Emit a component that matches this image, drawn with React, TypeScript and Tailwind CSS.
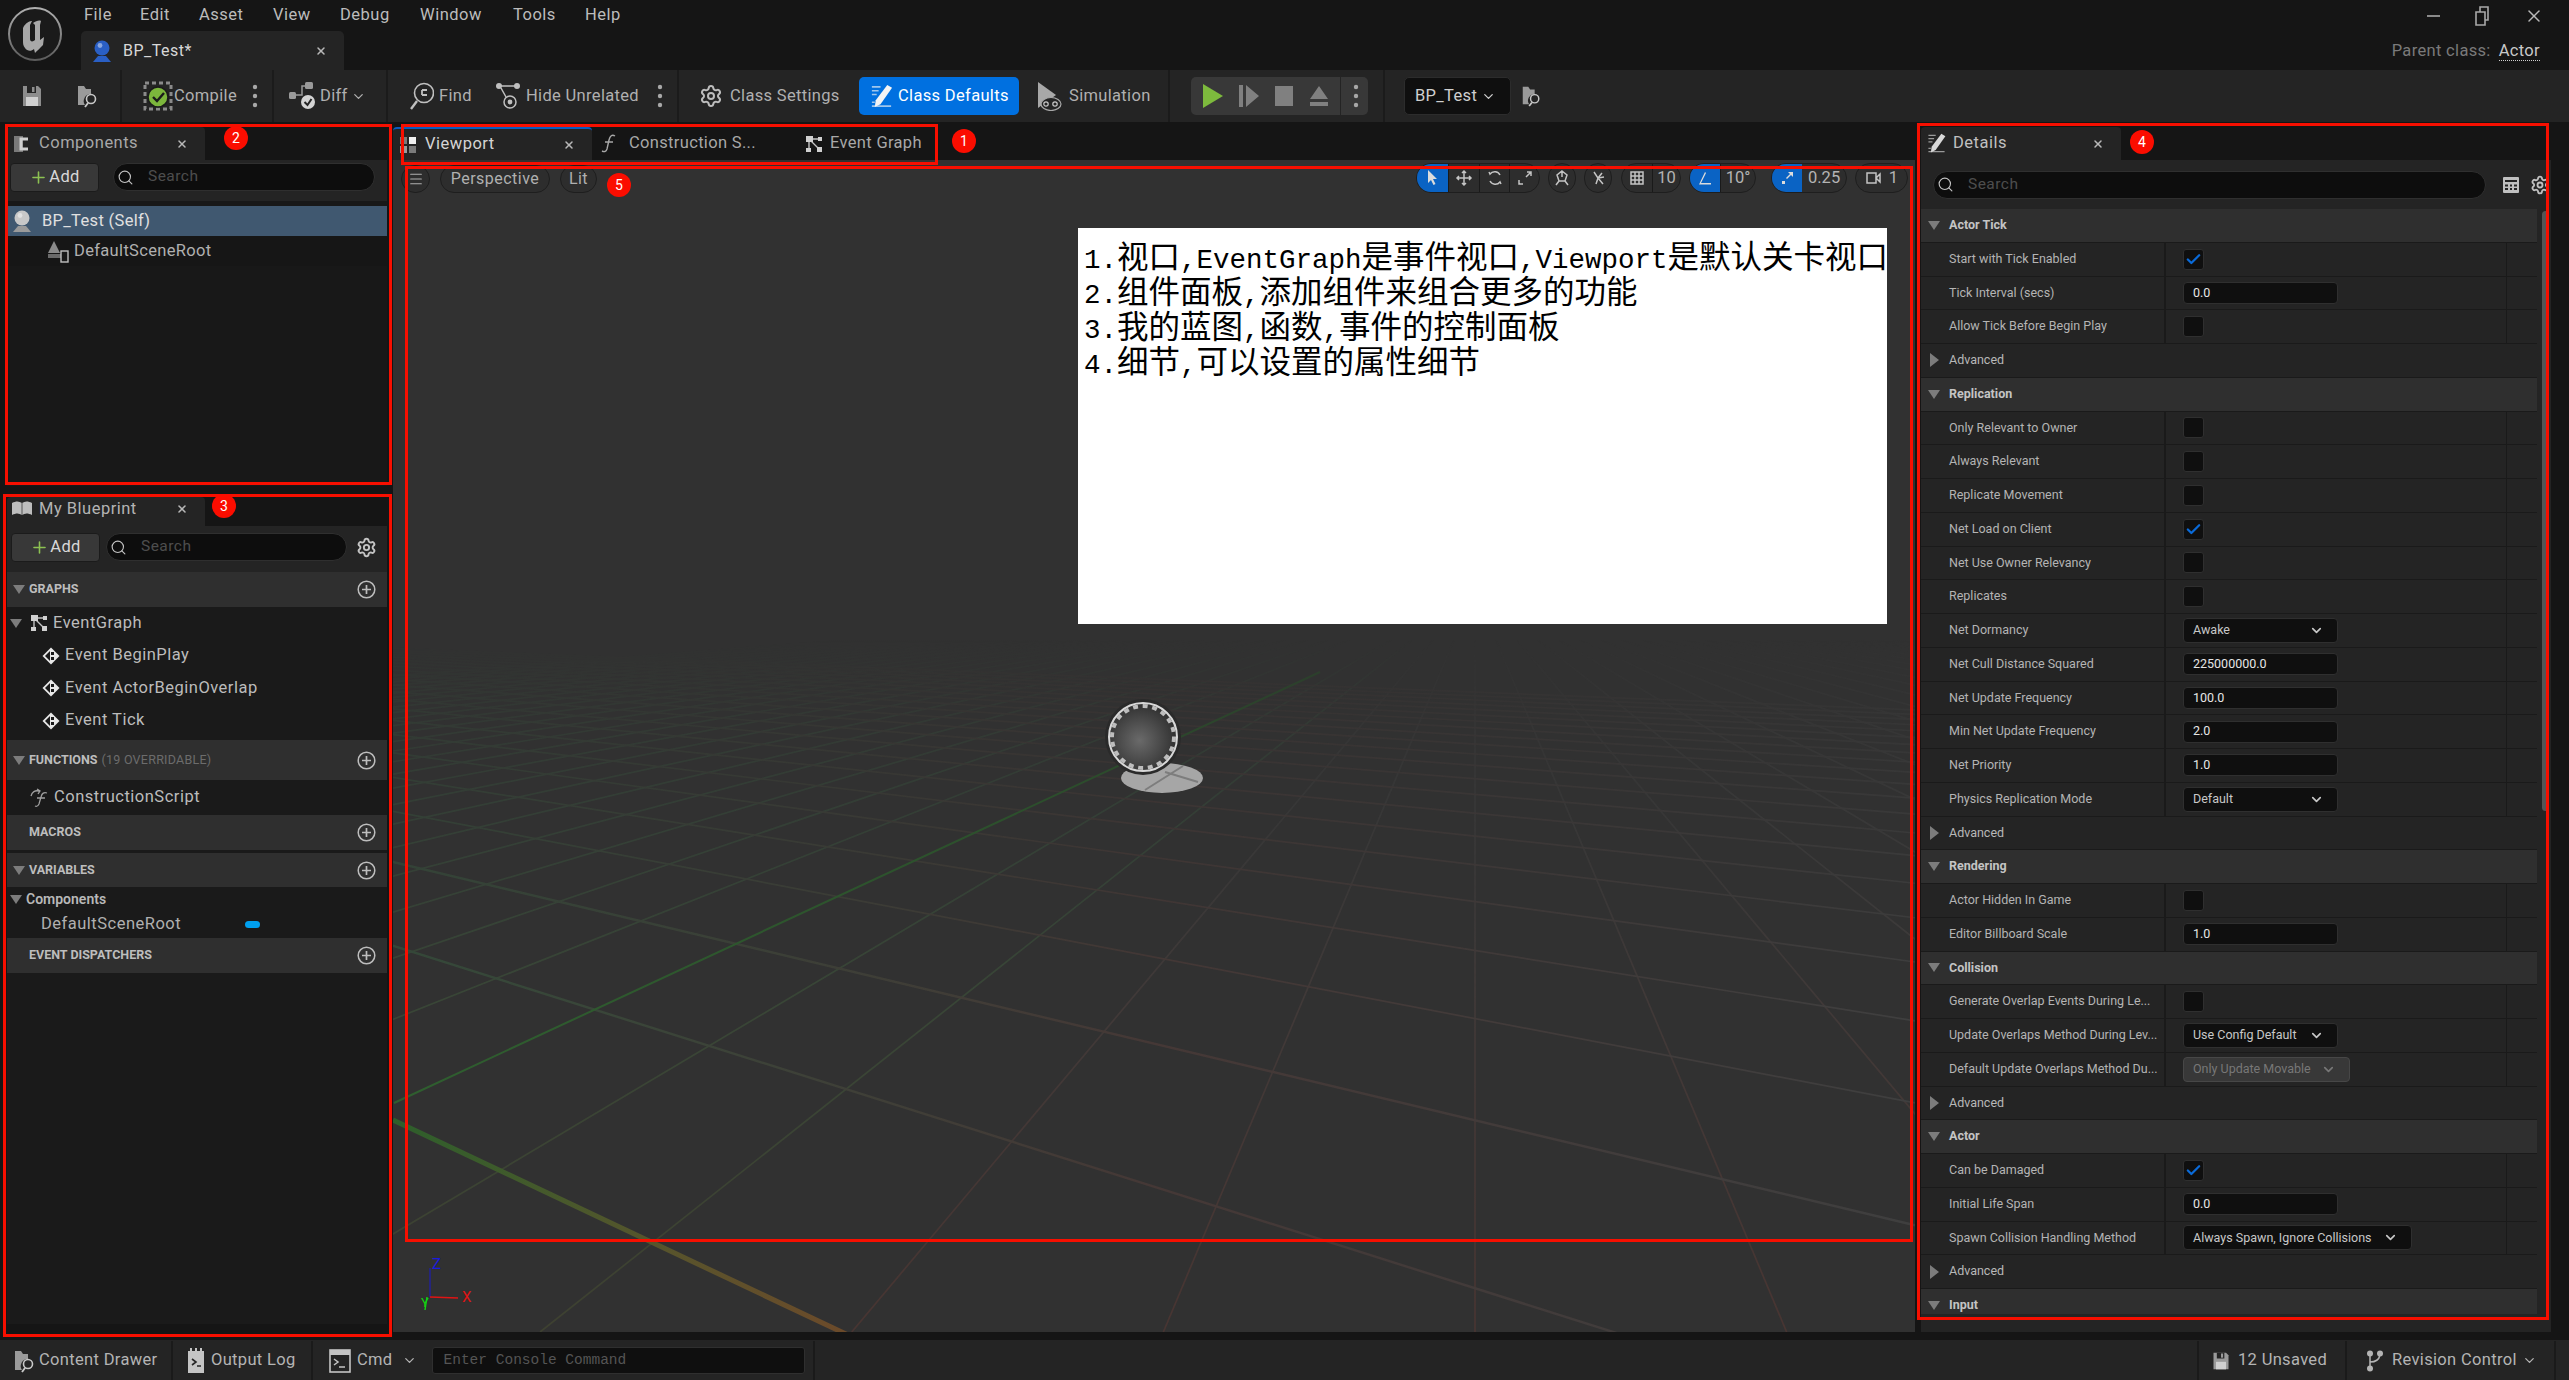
import React from "react";
import { ChevronDown, Plus, Search, Settings, X, Menu, Check } from "lucide-react";

const Sep = ({ ml = "" }: { ml?: string }) => <div className={`h-[52px] w-[2px] shrink-0 bg-[#1b1b1b] ${ml}`} />;

const Floppy = ({ size = 24, c = "#8d8d8d" }: { size?: number; c?: string }) => (
  <svg width={size} height={size} viewBox="0 0 24 24">
    <path d="M3 2h15l3 3v17H3z" fill={c} />
    <rect x="7" y="2" width="9" height="7" fill="#242424" />
    <rect x="12" y="3" width="2.5" height="5" fill={c} />
    <rect x="6" y="13" width="12" height="9" fill="#d0d0d0" />
  </svg>
);
const FolderFind = ({ size = 24 }: { size?: number }) => (
  <svg width={size} height={size} viewBox="0 0 24 24">
    <path d="M3 2h6l2 3h5v5a7 7 0 0 0-6 11H3z" fill="#9a9a9a" />
    <circle cx="16" cy="15" r="4.5" fill="none" stroke="#c8c8c8" strokeWidth="1.6" />
    <path d="M13 19l-3 4" stroke="#c8c8c8" strokeWidth="1.8" />
  </svg>
);
const Dots = () => (
  <svg width="6" height="26" viewBox="0 0 6 26">
    <circle cx="3" cy="4" r="2.2" fill="#a8a8a8" />
    <circle cx="3" cy="13" r="2.2" fill="#a8a8a8" />
    <circle cx="3" cy="22" r="2.2" fill="#a8a8a8" />
  </svg>
);
const GraphIcon = ({ size = 18 }: { size?: number }) => (
  <svg width={size} height={size} viewBox="0 0 18 18">
    <path d="M4 4l10 0M5 5l9 9M4 5v10" stroke="#c4c4c4" strokeWidth="1.4" fill="none" />
    <rect x="1" y="1" width="7" height="6" fill="#d0d0d0" />
    <rect x="13" y="2" width="4" height="4" fill="#d0d0d0" />
    <rect x="12" y="12" width="5" height="5" fill="#d0d0d0" />
    <rect x="1" y="13" width="5" height="4" fill="#d0d0d0" />
  </svg>
);
const PencilDoc = ({ size = 26, c = "#d8d8d8" }: { size?: number; c?: string }) => (
  <svg width={size} height={size} viewBox="0 0 26 26">
    <path d="M3 3h9M3 7h7M3 11h5M3 23h20M3 19h3" stroke={c} strokeOpacity="0.65" strokeWidth="1.6" />
    <path d="M19 1l5 3-12 17-6 3 1-7z" fill={c} />
  </svg>
);
const EventDiamond = () => (
  <svg width="18" height="18" viewBox="0 0 18 18">
    <path d="M9 .5L17.5 9 9 17.5.5 9z" fill="#e8e8e8" />
    <path d="M8 4l-5 5 5 5z" fill="#1a1a1a" />
    <path d="M9 5h3v3H9z" fill="#1a1a1a" />
    <path d="M9 10h3v3H9z" fill="#1a1a1a" />
  </svg>
);
const Tri = ({ open = true, c = "#7c7c7c" }: { open?: boolean; c?: string }) =>
  open ? (
    <svg width="12" height="9" viewBox="0 0 12 9" className="shrink-0"><path d="M0 0h12L6 9z" fill={c} /></svg>
  ) : (
    <svg width="9" height="14" viewBox="0 0 9 14" className="shrink-0"><path d="M0 0l9 7-9 7z" fill={c} /></svg>
  );
const CirclePlus = () => (
  <svg width="19" height="19" viewBox="0 0 19 19">
    <circle cx="9.5" cy="9.5" r="8.3" fill="none" stroke="#bdbdbd" strokeWidth="1.5" />
    <path d="M5 9.5h9M9.5 5v9" stroke="#bdbdbd" strokeWidth="1.7" />
  </svg>
);
const Bust = ({ c = "#2a5fc4", base = "#2a5fc4" }: { c?: string; base?: string }) => (
  <svg width="20" height="24" viewBox="0 0 20 24">
    <circle cx="10" cy="9" r="7.5" fill={c} />
    <circle cx="8" cy="6.5" r="2.4" fill="#ffffff" fillOpacity="0.45" />
    <path d="M6 17h8l5 6H1z" fill={base} />
  </svg>
);

const Tab = ({ w, h = "h-[33px]", icon, label, labelCls = "text-[#b4b4b4]", top = false, close = true }: { w: string; h?: string; icon: React.ReactNode; label: string; labelCls?: string; top?: boolean; close?: boolean }) => (
  <div className={`flex items-center rounded-t-[4px] bg-[#242424] ${h} ${w} ${top ? "border-t-2 border-[#0a5cc0]" : ""}`}>
    <div className="flex w-[30px] shrink-0 justify-center">{icon}</div>
    <span className={`ml-[2px] text-[16.5px] tracking-[0.03em] ${labelCls}`}>{label}</span>
    <div className="flex-1" />
    {close && <X size={12} strokeWidth={3} className="mr-[17px] text-[#b8b8b8]" />}
  </div>
);

const SearchBox = ({ w, h = "h-[28px]" }: { w: string; h?: string }) => (
  <div className={`flex items-center rounded-full border border-[#2f2f2f] bg-[#0d0d0d] ${w} ${h}`}>
    <Search size={17} strokeWidth={1.6} className="ml-[3px] text-[#c4c4c4]" />
    <span className="ml-[14px] text-[15.5px] tracking-[0.03em] text-[#4d4d4d]">Search</span>
  </div>
);

const AddBtn = () => (
  <div className="flex h-[29px] w-[89px] items-center justify-center rounded-[4px] border border-[#1b1b1b] bg-[#383838]">
    <Plus size={19} strokeWidth={2} className="text-[#8cc152]" />
    <span className="ml-[1px] text-[16.5px] tracking-[0.02em] text-[#d8d8d8]">Add</span>
  </div>
);

const SecHead = ({ label, extra, h, open = true, mb = "mb-0" }: { label: string; extra?: string; h: string; open?: boolean; mb?: string }) => (
  <div className={`flex items-center bg-[#2f2f2f] pr-[11px] ${h} ${mb}`}>
    <div className="flex w-[18px] shrink-0 justify-end">{open && <Tri />}</div>
    <span className="ml-[4px] text-[12.5px] font-bold text-[#bdbdbd]">{label}</span>
    {extra && <span className="ml-[4px] text-[12.5px] tracking-[0.02em] text-[#6c6c6c]">{extra}</span>}
    <div className="flex-1" />
    <CirclePlus />
  </div>
);

const BpRow = ({ h, pl, icon, label }: { h: string; pl: string; icon?: React.ReactNode; label: string }) => (
  <div className={`flex items-center ${h} ${pl}`}>
    {icon}
    <span className="ml-[5px] text-[16.5px] tracking-[0.03em] text-[#bcbcbc]">{label}</span>
  </div>
);

type Row =
  | { t: "h"; l: string }
  | { t: "a" }
  | { t: "c"; l: string; on?: boolean }
  | { t: "i"; l: string; v: string }
  | { t: "d"; l: string; v: string; w?: string; dis?: boolean };

const rows: Row[] = [
  { t: "h", l: "Actor Tick" },
  { t: "c", l: "Start with Tick Enabled", on: true },
  { t: "i", l: "Tick Interval (secs)", v: "0.0" },
  { t: "c", l: "Allow Tick Before Begin Play" },
  { t: "a" },
  { t: "h", l: "Replication" },
  { t: "c", l: "Only Relevant to Owner" },
  { t: "c", l: "Always Relevant" },
  { t: "c", l: "Replicate Movement" },
  { t: "c", l: "Net Load on Client", on: true },
  { t: "c", l: "Net Use Owner Relevancy" },
  { t: "c", l: "Replicates" },
  { t: "d", l: "Net Dormancy", v: "Awake" },
  { t: "i", l: "Net Cull Distance Squared", v: "225000000.0" },
  { t: "i", l: "Net Update Frequency", v: "100.0" },
  { t: "i", l: "Min Net Update Frequency", v: "2.0" },
  { t: "i", l: "Net Priority", v: "1.0" },
  { t: "d", l: "Physics Replication Mode", v: "Default" },
  { t: "a" },
  { t: "h", l: "Rendering" },
  { t: "c", l: "Actor Hidden In Game" },
  { t: "i", l: "Editor Billboard Scale", v: "1.0" },
  { t: "h", l: "Collision" },
  { t: "c", l: "Generate Overlap Events During Le..." },
  { t: "d", l: "Update Overlaps Method During Lev...", v: "Use Config Default" },
  { t: "d", l: "Default Update Overlaps Method Du...", v: "Only Update Movable", w: "w-[167px]", dis: true },
  { t: "a" },
  { t: "h", l: "Actor" },
  { t: "c", l: "Can be Damaged", on: true },
  { t: "i", l: "Initial Life Span", v: "0.0" },
  { t: "d", l: "Spawn Collision Handling Method", v: "Always Spawn, Ignore Collisions", w: "w-[229px]" },
  { t: "a" },
  { t: "h", l: "Input" },
];

const DetailRow = ({ r }: { r: Row }) => {
  if (r.t === "h")
    return (
      <div className="flex h-[33.75px] shrink-0 items-center border-b border-[#1a1a1a] bg-[#2f2f2f] pl-[7px]">
        <Tri />
        <span className="ml-[9px] text-[12.5px] font-bold text-[#c4c4c4]">{r.l}</span>
      </div>
    );
  if (r.t === "a")
    return (
      <div className="flex h-[33.75px] shrink-0 items-center border-b border-[#1a1a1a] bg-[#242424] pl-[9px]">
        <Tri open={false} />
        <span className="ml-[10px] text-[12.5px] text-[#b8b8b8]">Advanced</span>
      </div>
    );
  return (
    <div className="flex h-[33.75px] shrink-0 border-b border-[#1a1a1a] bg-[#242424]">
      <div className="flex w-[245px] shrink-0 items-center overflow-hidden whitespace-nowrap border-r-2 border-[#1a1a1a] pl-[28px] text-[12.5px] text-[#b4b4b4]">{r.l}</div>
      <div className="flex w-[341px] shrink-0 items-center border-r border-[#1a1a1a] pl-[17px]">
        {r.t === "c" && (
          <div className="flex h-[21px] w-[21px] items-center justify-center rounded-[3px] border border-[#2f2f2f] bg-[#0f0f0f]">
            {r.on && <Check size={17} strokeWidth={3.2} className="text-[#0a6ad8]" />}
          </div>
        )}
        {r.t === "i" && (
          <div className="flex h-[22px] w-[155px] items-center rounded-[4px] border border-[#2f2f2f] bg-[#0f0f0f] pl-[9px] text-[12.5px] text-[#e6e6e6]">{r.v}</div>
        )}
        {r.t === "d" && (
          <div className={`flex h-[25px] items-center justify-between rounded-[4px] border pl-[9px] pr-[13px] text-[12.5px] ${r.w ?? "w-[155px]"} ${r.dis ? "border-[#474747] bg-[#383838] text-[#777777]" : "border-[#2f2f2f] bg-[#0f0f0f] text-[#c8c8c8]"}`}>
            {r.v}
            <ChevronDown size={15} strokeWidth={2.6} />
          </div>
        )}
      </div>
      <div className="flex-1" />
    </div>
  );
};

const Pill = ({ w, children }: { w: string; children: React.ReactNode }) => (
  <div className={`flex h-[30px] items-center overflow-hidden rounded-full border border-[#1e1e1e] bg-[#2d2d2d] ${w}`}>{children}</div>
);
const Seg = ({ w, on, children, border = true }: { w: string; on?: boolean; children: React.ReactNode; border?: boolean }) => (
  <div className={`flex h-full items-center justify-center ${w} ${on ? "bg-[#0a63c4]" : ""} ${border ? "border-l border-[#1a1a1a]" : ""}`}>{children}</div>
);
const S = ({ d, fill = false }: { d: string; fill?: boolean }) => (
  <svg width="18" height="18" viewBox="0 0 18 18">
    <path d={d} fill={fill ? "#dcdcdc" : "none"} stroke={fill ? "none" : "#c4c4c4"} strokeWidth="1.5" />
  </svg>
);

const Grid = () => {
  const a: React.ReactNode[] = [];
  for (let k = -30; k <= 30; k++) {
    if (k === -5) continue;
    const x = 1475 + k * 0.42 * 742;
    a.push(<line key={`a${k}`} x1={1475} y1={590} x2={x} y2={1332} stroke={k < -2 ? "url(#ga)" : k < 3 ? "url(#gc)" : "url(#gd)"} strokeWidth={1.7} />);
  }
  const b: React.ReactNode[] = [];
  for (let k = 1; k <= 22; k++) {
    const s = 1 / (2.13 + 1.03 * k);
    b.push(<line key={`b${k}`} x1={-684} y1={605} x2={1915} y2={605 + s * 2599} stroke="url(#gb)" strokeWidth={k < 3 ? 2.4 : 1.7} />);
  }
  return (
    <svg className="absolute inset-0" width="1522" height="1172" viewBox="393 160 1522 1172">
      <defs>
        <linearGradient id="fade" gradientUnits="userSpaceOnUse" x1="0" y1="640" x2="0" y2="1000">
          <stop offset="0" stopColor="#000" />
          <stop offset="0.25" stopColor="#666" />
          <stop offset="1" stopColor="#fff" />
        </linearGradient>
        <mask id="m" maskUnits="userSpaceOnUse" x="393" y="160" width="1522" height="1172">
          <rect x="393" y="160" width="1522" height="1172" fill="url(#fade)" />
        </mask>
        <linearGradient id="ga" gradientUnits="userSpaceOnUse" x1="0" y1="800" x2="0" y2="1332">
          <stop offset="0" stopColor="#36493a" />
          <stop offset="1" stopColor="#3e4131" />
        </linearGradient>
        <linearGradient id="gc" gradientUnits="userSpaceOnUse" x1="0" y1="800" x2="0" y2="1332">
          <stop offset="0" stopColor="#3c3c3c" />
          <stop offset="1" stopColor="#483532" />
        </linearGradient>
        <linearGradient id="gd" gradientUnits="userSpaceOnUse" x1="0" y1="800" x2="0" y2="1332">
          <stop offset="0" stopColor="#3e3e3e" />
          <stop offset="1" stopColor="#433735" />
        </linearGradient>
        <linearGradient id="gb" gradientUnits="userSpaceOnUse" x1="393" y1="0" x2="1915" y2="0">
          <stop offset="0" stopColor="#354b3a" />
          <stop offset="0.5" stopColor="#453836" />
          <stop offset="1" stopColor="#3f3f3f" />
        </linearGradient>
        <linearGradient id="thick" gradientUnits="userSpaceOnUse" x1="393" y1="1120" x2="848" y2="1335">
          <stop offset="0" stopColor="#2d5f2b" />
          <stop offset="0.55" stopColor="#55552c" />
          <stop offset="1" stopColor="#6c4a2a" />
        </linearGradient>
        <linearGradient id="gthin" gradientUnits="userSpaceOnUse" x1="394" y1="1103" x2="1320" y2="670">
          <stop offset="0" stopColor="#2f5f2f" />
          <stop offset="0.7" stopColor="#2c4f2c" />
          <stop offset="1" stopColor="#2c3f2c" />
        </linearGradient>
        <radialGradient id="ball" cx="0.45" cy="0.55" r="0.6">
          <stop offset="0" stopColor="#6a6a6a" />
          <stop offset="1" stopColor="#2b2b2b" />
        </radialGradient>
      </defs>
      <g mask="url(#m)">
        {a}
        {b}
      </g>
      <line x1={394} y1={1103} x2={1320} y2={672} stroke="url(#gthin)" strokeWidth={2} />
      <line x1={393} y1={1120} x2={848} y2={1335} stroke="url(#thick)" strokeWidth={5} />
      <ellipse cx={1162} cy={778} rx={41} ry={15} fill="#a6a6a6" />
      <path d="M1145 790 L1183 766 M1165 772 L1198 782" stroke="#7d7d7d" strokeWidth="2" fill="none" />
      <circle cx={1143} cy={737} r={38} fill="#2a2a2a" />
      <circle cx={1143} cy={737} r={34} fill="url(#ball)" stroke="#d8d8d8" strokeWidth="2" />
      <circle cx={1143} cy={737} r={31} fill="none" stroke="#bdbdbd" strokeWidth="4" strokeDasharray="5 4.7" />
      <line x1={430} y1={1297} x2={430} y2={1268} stroke="#1a1ac8" strokeWidth="1" />
      <line x1={430} y1={1297} x2={458} y2={1298} stroke="#e01414" strokeWidth="1.4" />
      <line x1={427} y1={1297} x2={425} y2={1310} stroke="#12d412" strokeWidth="1.4" />
    </svg>
  );
};

const Rect = ({ cls }: { cls: string }) => <div className={`pointer-events-none absolute border-[3px] border-[#f70f00] ${cls}`} />;
const Badge = ({ n, cls }: { n: string; cls: string }) => (
  <div className={`absolute flex h-[24px] w-[24px] items-center justify-center rounded-full bg-[#fb0d00] text-[14px] text-white ${cls}`}>{n}</div>
);

const Logo = () => (
  <svg width="56" height="56" viewBox="0 0 56 56" className="shrink-0">
    <defs>
      <linearGradient id="lg" x1="0" y1="0" x2="0" y2="1">
        <stop offset="0" stopColor="#b0b0b0" />
        <stop offset="1" stopColor="#5c5c5c" />
      </linearGradient>
    </defs>
    <circle cx="28" cy="28" r="26" fill="#1a1a1a" stroke="url(#lg)" strokeWidth="2" />
    <path d="M17 20c3-4 6-5 8-5l-2 4v14c0 3 3 3 5 1V19l-2-2c3-2 6-3 8-2l-1 4v15l4-3-1 8c-3 3-6 6-8 8l-1-4c-3 3-7 2-9-1-2-2-2-5-2-7V22z" fill="#a8a8a8" />
  </svg>
);

const StatusItem = ({ w, children }: { w: string; children: React.ReactNode }) => (
  <div className={`flex h-full shrink-0 items-center border-r-2 border-[#1a1a1a] ${w}`}>{children}</div>
);

const L = ({ children }: { children: React.ReactNode }) => (
  <span className="font-['Liberation_Mono',monospace] text-[27.5px] leading-[0]">{children}</span>
);

export default function App() {
  return (
    <div className="relative flex h-[1380px] w-[2569px] flex-col overflow-hidden bg-[#151515] font-['Roboto',sans-serif]">
      {/* title bar */}
      <div className="relative flex h-[70px] shrink-0 bg-[#151515]">
        <div className="ml-[7px] mt-[6px]"><Logo /></div>
        <div className="ml-[18px] flex flex-col">
          <div className="flex h-[31px] items-start pl-[3px] pt-[3px] text-[16.5px] tracking-[0.03em] text-[#bcbcbc]">
            <span className="w-[56px]">File</span>
            <span className="w-[59px]">Edit</span>
            <span className="w-[74px]">Asset</span>
            <span className="w-[67px]">View</span>
            <span className="w-[80px]">Debug</span>
            <span className="w-[93px]">Window</span>
            <span className="w-[72px]">Tools</span>
            <span>Help</span>
          </div>
          <div className="flex h-[39px] w-[263px] items-center rounded-t-[5px] bg-[#242424] pl-[11px]">
            <Bust />
            <span className="ml-[11px] text-[16px] tracking-[0.03em] text-[#d8d8d8]">BP_Test*</span>
            <div className="flex-1" />
            <X size={12} strokeWidth={3} className="mr-[17px] text-[#b8b8b8]" />
          </div>
        </div>
        <div className="flex-1" />
        <div className="flex flex-col items-end pr-[29px]">
          <div className="flex h-[31px] items-center gap-[35px] text-[#b8b8b8]">
            <div className="h-[2px] w-[13px] bg-[#8a8a8a]" />
            <svg width="14" height="20" viewBox="0 0 14 20"><path d="M1 6h9v13H1zM5 6V1h8v13h-3" fill="none" stroke="#a8a8a8" strokeWidth="1.6" /></svg>
            <X size={20} strokeWidth={1.8} className="-mr-[4px]" />
          </div>
          <div className="mt-[8px] flex items-center text-[16.5px] tracking-[0.02em]">
            <span className="text-[#7a7a7a]">Parent class:</span>
            <span className="ml-[8px] border-b border-dotted border-[#d0d0d0] leading-[18px] text-[#c8c8c8]">Actor</span>
          </div>
        </div>
      </div>

      {/* toolbar */}
      <div className="flex h-[52px] shrink-0 items-center bg-[#242424] text-[16.5px] tracking-[0.02em] text-[#b0b0b0]">
        <div className="flex w-[120px] shrink-0 items-center pl-[20px]">
          <Floppy />
          <div className="ml-[31px]"><FolderFind /></div>
        </div>
        <Sep />
        <div className="flex w-[150px] shrink-0 items-center pl-[21px]">
          <svg width="30" height="30" viewBox="0 0 30 30">
            <rect x="2" y="2" width="26" height="26" fill="none" stroke="#8a8a8a" strokeWidth="3" strokeDasharray="4 3" />
            <circle cx="15" cy="16" r="10" fill="#7cb63c" stroke="#1b1b1b" strokeWidth="1.5" />
            <path d="M10 16l4 4 7-8" fill="none" stroke="#1b1b1b" strokeWidth="2.4" />
          </svg>
          <span className="ml-[1px] w-[78px]">Compile</span>
          <Dots />
        </div>
        <Sep />
        <div className="flex w-[112px] shrink-0 items-center pl-[15px]">
          <svg width="30" height="28" viewBox="0 0 30 28">
            <rect x="0" y="10" width="7" height="7" rx="1.5" fill="#9a9a9a" />
            <rect x="16" y="0" width="8" height="7" rx="1.5" fill="#9a9a9a" />
            <path d="M7 13h6V4h3" fill="none" stroke="#9a9a9a" strokeWidth="1.5" />
            <circle cx="19" cy="20" r="7" fill="#d4d4d4" />
            <path d="M15.5 20l3 3 4-6" fill="none" stroke="#242424" strokeWidth="2" />
          </svg>
          <span className="ml-[1px]">Diff</span>
          <ChevronDown size={15} strokeWidth={2} className="ml-[3px]" />
        </div>
        <Sep />
        <div className="flex w-[289px] shrink-0 items-center pl-[22px]">
          <svg width="24" height="28" viewBox="0 0 24 28">
            <circle cx="14" cy="11" r="9.5" fill="none" stroke="#c0c0c0" strokeWidth="1.6" />
            <path d="M7 19L1 27" stroke="#c0c0c0" strokeWidth="2.4" />
            <path d="M12 8h5M12 13h5M12 8v5" stroke="#c0c0c0" strokeWidth="1.8" fill="none" />
          </svg>
          <span className="ml-[5px] w-[42px]">Find</span>
          <svg width="26" height="28" viewBox="0 0 26 28" className="ml-[15px]">
            <circle cx="3" cy="4" r="3" fill="#c0c0c0" />
            <circle cx="21" cy="4" r="3" fill="#c0c0c0" />
            <path d="M3 4h18M5 6l5 9" stroke="#c0c0c0" strokeWidth="1.5" />
            <circle cx="14" cy="20" r="6" fill="none" stroke="#c0c0c0" strokeWidth="1.5" />
            <circle cx="14" cy="20" r="2.4" fill="#c0c0c0" />
          </svg>
          <span className="ml-[4px] w-[122px] whitespace-nowrap">Hide Unrelated</span>
          <div className="ml-[9px] flex"><Dots /></div>
        </div>
        <Sep />
        <div className="flex w-[180px] shrink-0 items-center pl-[20px]">
          <Settings size={24} strokeWidth={2} className="text-[#bdbdbd]" />
          <span className="ml-[7px] whitespace-nowrap">Class Settings</span>
        </div>
        <div className="flex h-[38px] w-[160px] shrink-0 items-center rounded-[5px] bg-[#0070e0] pl-[10px] text-white">
          <PencilDoc size={25} c="#f4f4f4" />
          <span className="ml-[4px] whitespace-nowrap">Class Defaults</span>
        </div>
        <div className="flex w-[149px] shrink-0 items-center pl-[17px]">
          <svg width="26" height="30" viewBox="0 0 26 30">
            <path d="M2 1l18 13-18 13z" fill="#a8a8a8" />
            <ellipse cx="15" cy="23" rx="10" ry="6.5" fill="#242424" stroke="#a8a8a8" strokeWidth="1.2" />
            <circle cx="10" cy="23" r="2.2" fill="none" stroke="#c8c8c8" strokeWidth="1.2" />
            <circle cx="19" cy="23" r="2.2" fill="none" stroke="#c8c8c8" strokeWidth="1.2" />
          </svg>
          <span className="ml-[7px]">Simulation</span>
        </div>
        <Sep />
        <div className="ml-[21px] flex h-[38px] w-[177px] shrink-0 items-center rounded-[5px] bg-[#383838] pl-[12px]">
          <svg width="20" height="24" viewBox="0 0 20 24"><path d="M0 0l20 12L0 24z" fill="#7dba3d" /></svg>
          <svg width="20" height="24" viewBox="0 0 20 24" className="ml-[16px]"><path d="M0 1h4v22H0zM7 1l13 11L7 23z" fill="#808080" /></svg>
          <div className="ml-[16px] h-[20px] w-[18px] bg-[#808080]" />
          <svg width="20" height="24" viewBox="0 0 20 24" className="ml-[16px]"><path d="M10 2l9 13H1zM1 18h18v4H1z" fill="#808080" /></svg>
          <div className="ml-[11px] h-[38px] w-[1px] bg-[#242424]" />
          <div className="ml-[12px] flex"><Dots /></div>
        </div>
        <Sep ml="ml-[15px]" />
        <div className="ml-[19px] flex h-[38px] w-[107px] shrink-0 items-center rounded-[5px] border border-[#2c2c2c] bg-[#0f0f0f] pl-[10px] text-[#d0d0d0]">
          BP_Test
          <ChevronDown size={15} strokeWidth={2} className="ml-[4px]" />
        </div>
        <div className="ml-[9px]"><FolderFind size={22} /></div>
      </div>

      {/* main */}
      <div className="flex min-h-0 flex-1">
        {/* left column */}
        <div className="flex w-[393px] shrink-0 flex-col pl-[7px] pr-[6px] pt-[5px]">
          <div className="flex h-[359px] shrink-0 flex-col">
            <Tab
              w="w-[198px]"
              icon={
                <svg width="20" height="20" viewBox="0 0 20 20">
                  <path d="M2 2h9v16H2z" fill="#7a7a7a" />
                  <path d="M16 5h-7v10h7" fill="none" stroke="#d0d0d0" strokeWidth="3" />
                </svg>
              }
              label="Components"
              labelCls="text-[#a8a8a8]"
            />
            <div className="flex h-[41px] shrink-0 items-start bg-[#242424] pl-[3px] pt-[3px]">
              <AddBtn />
              <div className="ml-[14px]"><SearchBox w="w-[262px]" /></div>
            </div>
            <div className="flex-1 bg-[#181818] pt-[5px]">
              <div className="flex h-[30px] items-center bg-[#405870] pl-[5px]">
                <Bust c="#c8c8c8" base="#9a9a9a" />
                <span className="ml-[10px] text-[16.5px] tracking-[0.02em] text-[#e0e0e0]">BP_Test (Self)</span>
              </div>
              <div className="flex h-[30px] items-center bg-[#161616] pl-[40px]">
                <svg width="22" height="24" viewBox="0 0 22 24">
                  <path d="M7 2l6 12H1z" fill="#8a8a8a" />
                  <path d="M1 15h14v4H1z" fill="#6a6a6a" />
                  <rect x="14" y="12" width="7" height="11" fill="#1a1a1a" stroke="#c0c0c0" strokeWidth="1.4" />
                </svg>
                <span className="ml-[5px] text-[16.5px] tracking-[0.02em] text-[#b0b0b0]">DefaultSceneRoot</span>
              </div>
            </div>
          </div>
          <div className="mt-[11px] flex min-h-0 flex-1 flex-col pb-[8px]">
            <Tab
              w="w-[198px]"
              h="h-[29px] pb-[5px]"
              icon={
                <svg width="22" height="18" viewBox="0 0 22 18">
                  <path d="M1 3c4-2 7-2 10 0 3-2 6-2 10 0v12c-4-2-7-2-10 0-3-2-6-2-10 0z" fill="#bdbdbd" />
                  <path d="M11 3v12" stroke="#555555" />
                </svg>
              }
              label="My Blueprint"
              labelCls="text-[#b4b4b4]"
            />
            <div className="flex h-[46px] shrink-0 items-center bg-[#242424] pb-[4px] pl-[4px]">
              <AddBtn />
              <div className="ml-[6px]"><SearchBox w="w-[241px]" /></div>
              <Settings size={21} strokeWidth={2.2} className="ml-[9px] text-[#c4c4c4]" />
            </div>
            <div className="flex-1 bg-[#1a1a1a]">
              <SecHead h="h-[35px]" label="GRAPHS" />
              <div className="flex h-[32px] items-center pl-[3px]">
                <Tri />
                <div className="ml-[8px]"><GraphIcon /></div>
                <span className="ml-[5px] text-[16.5px] tracking-[0.03em] text-[#bcbcbc]">EventGraph</span>
              </div>
              <BpRow h="h-[33px]" pl="pl-[35px]" icon={<EventDiamond />} label="Event BeginPlay" />
              <BpRow h="h-[32px]" pl="pl-[35px]" icon={<EventDiamond />} label="Event ActorBeginOverlap" />
              <div className="h-[36px] pb-[3px]">
                <BpRow h="h-[33px]" pl="pl-[35px]" icon={<EventDiamond />} label="Event Tick" />
              </div>
              <SecHead h="h-[40px]" label="FUNCTIONS" extra="(19 OVERRIDABLE)" />
              <BpRow
                h="h-[35px]"
                pl="pl-[23px]"
                icon={
                  <svg width="19" height="20" viewBox="0 0 19 20">
                    <path d="M1 8c1-4 4-6 8-5M7 1l3 2-2 3" fill="none" stroke="#a0a0a0" strokeWidth="1.3" />
                    <path d="M17 5c-3-1-5 0-6 4l-2 7c-1 2-2 3-4 2M7 10h8" fill="none" stroke="#a0a0a0" strokeWidth="1.3" />
                  </svg>
                }
                label="ConstructionScript"
              />
              <SecHead h="h-[35px]" label="MACROS" open={false} mb="mb-[3px]" />
              <SecHead h="h-[34px]" label="VARIABLES" />
              <div className="flex h-[24px] items-center pl-[3px]">
                <Tri />
                <span className="ml-[4px] text-[14px] font-semibold text-[#b8b8b8]">Components</span>
              </div>
              <div className="flex h-[27px] items-center pl-[34px]">
                <span className="w-[204px] text-[16.5px] tracking-[0.03em] text-[#b0b0b0]">DefaultSceneRoot</span>
                <div className="h-[7px] w-[15px] rounded-full bg-[#00a0f0]" />
              </div>
              <SecHead h="h-[35px]" label="EVENT DISPATCHERS" open={false} />
            </div>
          </div>
        </div>

        {/* center */}
        <div className="flex w-[1522px] shrink-0 flex-col pt-[5px]">
          <div className="flex h-[33px] shrink-0 items-center">
            <Tab
              w="w-[199px]"
              top
              icon={
                <svg width="18" height="18" viewBox="0 0 18 18">
                  <rect x="1" y="1" width="7" height="7" fill="#7a7a7a" />
                  <rect x="10" y="1" width="7" height="7" fill="#f0f0f0" />
                  <rect x="1" y="10" width="7" height="7" fill="#9a9a9a" />
                  <rect x="10" y="10" width="7" height="7" fill="#7a7a7a" />
                </svg>
              }
              label="Viewport"
              labelCls="text-[#d4d4d4]"
            />
            <svg width="16" height="22" viewBox="0 0 16 22" className="ml-[9px]">
              <path d="M14 3c-3-2-5 0-6 4L6 16c-1 3-3 3-5 2M4 9h8" fill="none" stroke="#a8a8a8" strokeWidth="1.4" />
            </svg>
            <span className="ml-[12px] w-[131px] whitespace-nowrap text-[16.5px] tracking-[0.02em] text-[#a8a8a8]">Construction S...</span>
            <div className="ml-[45px]"><GraphIcon /></div>
            <span className="ml-[7px] whitespace-nowrap text-[16.5px] tracking-[0.02em] text-[#a8a8a8]">Event Graph</span>
          </div>
          <div className="relative min-h-0 flex-1 overflow-hidden bg-[#313131]">
            <Grid />
            {/* viewport bar (over the scene) */}
            <div className="absolute left-[8px] top-[5px] flex items-center gap-[10px] text-[16px] tracking-[0.03em] text-[#b0b0b0]">
              <div className="flex h-[28px] w-[29px] items-center justify-center rounded-full border border-[#1e1e1e] bg-[#2d2d2d]"><Menu size={16} strokeWidth={1.6} /></div>
              <div className="flex h-[28px] w-[110px] items-center justify-center rounded-full border border-[#1e1e1e] bg-[#2d2d2d]">Perspective</div>
              <div className="flex h-[28px] w-[37px] items-center justify-center rounded-full border border-[#1e1e1e] bg-[#2d2d2d]">Lit</div>
            </div>
            <div className="absolute right-[7px] top-[3px] flex items-center text-[16.5px] text-[#b4b4b4]">
              <Pill w="w-[124px]">
                <Seg w="w-[31px]" on border={false}><S fill d="M5 1l9 9-4 0 2.5 5-2 1-2.500-5L5 14z" /></Seg>
                <Seg w="w-[32px]"><S d="M9 2v14M2 9h14M7 4l2-2 2 2M7 14l2 2 2-2M4 7L2 9l2 2M14 7l2 2-2 2" /></Seg>
                <Seg w="w-[30px]"><S d="M14 6a6 6 0 0 0-10-1l-1-2M4 12a6 6 0 0 0 10 1l1 2" /></Seg>
                <Seg w="w-[30px]"><S d="M10 8l5-5M11 3h4v4M3 15l1-1M3 11v4h4" /></Seg>
              </Pill>
              <div className="ml-[8px]">
                <Pill w="w-[28px]"><Seg w="w-[28px]" border={false}><S d="M9 2l5 4-2 6H6L4 6zM6 12l-3 4M12 12l3 4M9 2v6" /></Seg></Pill>
              </div>
              <div className="ml-[8px]">
                <Pill w="w-[28px]"><Seg w="w-[28px]" border={false}><S d="M5 3l4 6-2 6M9 9l6-1M13 4l-4 5 5 6" /></Seg></Pill>
              </div>
              <div className="ml-[9px]">
                <Pill w="w-[60px]">
                  <Seg w="w-[31px]" border={false}><S d="M3 3h12v12H3zM3 7h12M3 11h12M7 3v12M11 3v12" /></Seg>
                  <Seg w="w-[29px]">10</Seg>
                </Pill>
              </div>
              <div className="ml-[8px]">
                <Pill w="w-[67px]">
                  <Seg w="w-[31px]" on border={false}><S fill d="M9 3l1 1-5 10h10v1.500H3z" /></Seg>
                  <Seg w="w-[36px]">10°</Seg>
                </Pill>
              </div>
              <div className="ml-[15px]">
                <Pill w="w-[76px]">
                  <Seg w="w-[31px]" on border={false}><S fill d="M10 3h5v5l-2-2-4 4-1-1 4-4zM4 12h3v3H4z" /></Seg>
                  <Seg w="w-[45px]" border={false}>0.25</Seg>
                </Pill>
              </div>
              <div className="ml-[8px]">
                <Pill w="w-[53px]">
                  <div className="flex w-full items-center justify-center gap-[6px]">
                    <S d="M2 4h9v10H2zM15 5l-4 4 4 4z" />
                    <span>1</span>
                  </div>
                </Pill>
              </div>
            </div>
            {/* annotation picture */}
            <div className="absolute left-[685px] top-[68px] h-[396px] w-[809px] whitespace-nowrap bg-white pl-[6px] pt-[12px] font-['Liberation_Serif','Noto_Sans_CJK_SC',serif] text-[31.5px] leading-[35px] text-black">
              <div className="h-[35px]"><L>1.</L>视口<L>,EventGraph</L>是事件视口<L>,Viewport</L>是默认关卡视口</div>
              <div className="h-[35px]"><L>2.</L>组件面板<L>,</L>添加组件来组合更多的功能</div>
              <div className="h-[35px]"><L>3.</L>我的蓝图<L>,</L>函数<L>,</L>事件的控制面板</div>
              <div className="h-[35px]"><L>4.</L>细节<L>,</L>可以设置的属性细节</div>
            </div>
            <span className="absolute left-[39px] top-[1097px] text-[15px] leading-none text-[#1a1ae0]">Z</span>
            <span className="absolute left-[69px] top-[1130px] text-[15px] leading-none text-[#e01414]">X</span>
            <span className="absolute left-[28px] top-[1136px] text-[13px] leading-none text-[#12d412]">Y</span>
          </div>
        </div>

        {/* right column */}
        <div className="flex flex-1 flex-col pl-[6px] pt-[5px]">
          <div className="flex h-[33px] shrink-0">
            <Tab w="w-[200px]" icon={<PencilDoc size={21} />} label="Details" labelCls="text-[#c0c0c0]" />
          </div>
          <div className="flex min-h-0 w-[630px] flex-1 flex-col bg-[#242424]">
            <div className="flex h-[49px] shrink-0 items-center pl-[12px]">
              <SearchBox w="w-[553px]" />
              <svg width="18" height="18" viewBox="0 0 18 18" className="ml-[16px]">
                <rect x="1" y="1" width="16" height="16" rx="1" fill="#c0c0c0" />
                <path d="M3 5h12M3 9.500h3M8 9.500h2M12 9.500h3M3 13h3M8 13h2M12 13h3" stroke="#242424" strokeWidth="2" />
              </svg>
              <Settings size={20} strokeWidth={2.2} className="ml-[10px] text-[#c0c0c0]" />
            </div>
            <div className="relative h-[1105px] shrink-0 overflow-hidden">
              <div className="flex w-[616px] flex-col">
                {rows.map((r, i) => (
                  <DetailRow key={i} r={r} />
                ))}
              </div>
              <div className="absolute left-[621px] top-[2px] h-[600px] w-[7px] rounded-full bg-[#555555]" />
            </div>
          </div>
        </div>
      </div>

      {/* status bar */}
      <div className="mt-[8px] flex h-[40px] shrink-0 items-center bg-[#242424] pt-[1px] text-[16.5px] tracking-[0.02em] text-[#b4b4b4]">
        <StatusItem w="w-[173px] pl-[12px]">
          <FolderFind size={24} />
          <span className="ml-[3px] whitespace-nowrap">Content Drawer</span>
        </StatusItem>
        <StatusItem w="w-[140px] pl-[13px]">
          <svg width="20" height="26" viewBox="0 0 20 26">
            <path d="M2 3h16v22H2z" fill="#c4c4c4" />
            <path d="M5 0v5M10 0v5M15 0v5" stroke="#c4c4c4" strokeWidth="2" />
            <path d="M6 11l4 3-4 3M11 18h4" stroke="#242424" strokeWidth="1.6" fill="none" />
          </svg>
          <span className="ml-[5px]">Output Log</span>
        </StatusItem>
        <div className="flex h-full w-[502px] shrink-0 items-center border-r-2 border-[#1a1a1a] pl-[16px]">
          <svg width="22" height="24" viewBox="0 0 22 24">
            <rect x="1" y="1" width="20" height="22" fill="#242424" stroke="#c4c4c4" strokeWidth="1.6" />
            <rect x="1" y="1" width="20" height="5" fill="#c4c4c4" />
            <path d="M5 10l4 3-4 3M10 18h6" stroke="#c4c4c4" strokeWidth="1.5" fill="none" />
          </svg>
          <span className="ml-[6px]">Cmd</span>
          <ChevronDown size={15} strokeWidth={2} className="ml-[9px]" />
          <div className="ml-[15px] flex h-[27px] w-[373px] items-center rounded-[3px] border border-[#2f2f2f] bg-[#0f0f0f] pl-[11px] font-['Liberation_Mono',monospace] text-[14.5px] tracking-normal text-[#555555]">Enter Console Command</div>
        </div>
        <div className="flex-1" />
        <StatusItem w="w-[150px] border-l-2 pl-[12px]">
          <Floppy size={20} c="#9a9a9a" />
          <span className="ml-[7px] whitespace-nowrap">12 Unsaved</span>
        </StatusItem>
        <StatusItem w="w-[209px] pl-[19px]">
          <svg width="18" height="22" viewBox="0 0 18 22">
            <circle cx="4" cy="3.500" r="3" fill="#b4b4b4" />
            <circle cx="14" cy="3.500" r="3" fill="#b4b4b4" />
            <circle cx="4" cy="18.500" r="3" fill="#b4b4b4" />
            <path d="M4 5v12M4 12c5 0 9-2 10-7" fill="none" stroke="#b4b4b4" strokeWidth="1.5" />
          </svg>
          <span className="ml-[8px] whitespace-nowrap">Revision Control</span>
          <ChevronDown size={15} strokeWidth={2} className="ml-[5px]" />
        </StatusItem>
        <div className="w-[13px]" />
      </div>

      {/* annotations over the screen */}
      <Rect cls="left-[5px] top-[124px] h-[361px] w-[387px]" />
      <Rect cls="left-[3px] top-[494px] h-[843px] w-[389px]" />
      <Rect cls="left-[401px] top-[124px] h-[41px] w-[537px]" />
      <Rect cls="left-[405px] top-[166px] h-[1076px] w-[1508px]" />
      <Rect cls="left-[1917px] top-[123px] h-[1197px] w-[632px]" />
      <Badge n="1" cls="left-[952px] top-[129px]" />
      <Badge n="2" cls="left-[224px] top-[126px]" />
      <Badge n="3" cls="left-[212px] top-[494px]" />
      <Badge n="4" cls="left-[2130px] top-[130px]" />
      <Badge n="5" cls="left-[607px] top-[173px]" />
    </div>
  );
}
